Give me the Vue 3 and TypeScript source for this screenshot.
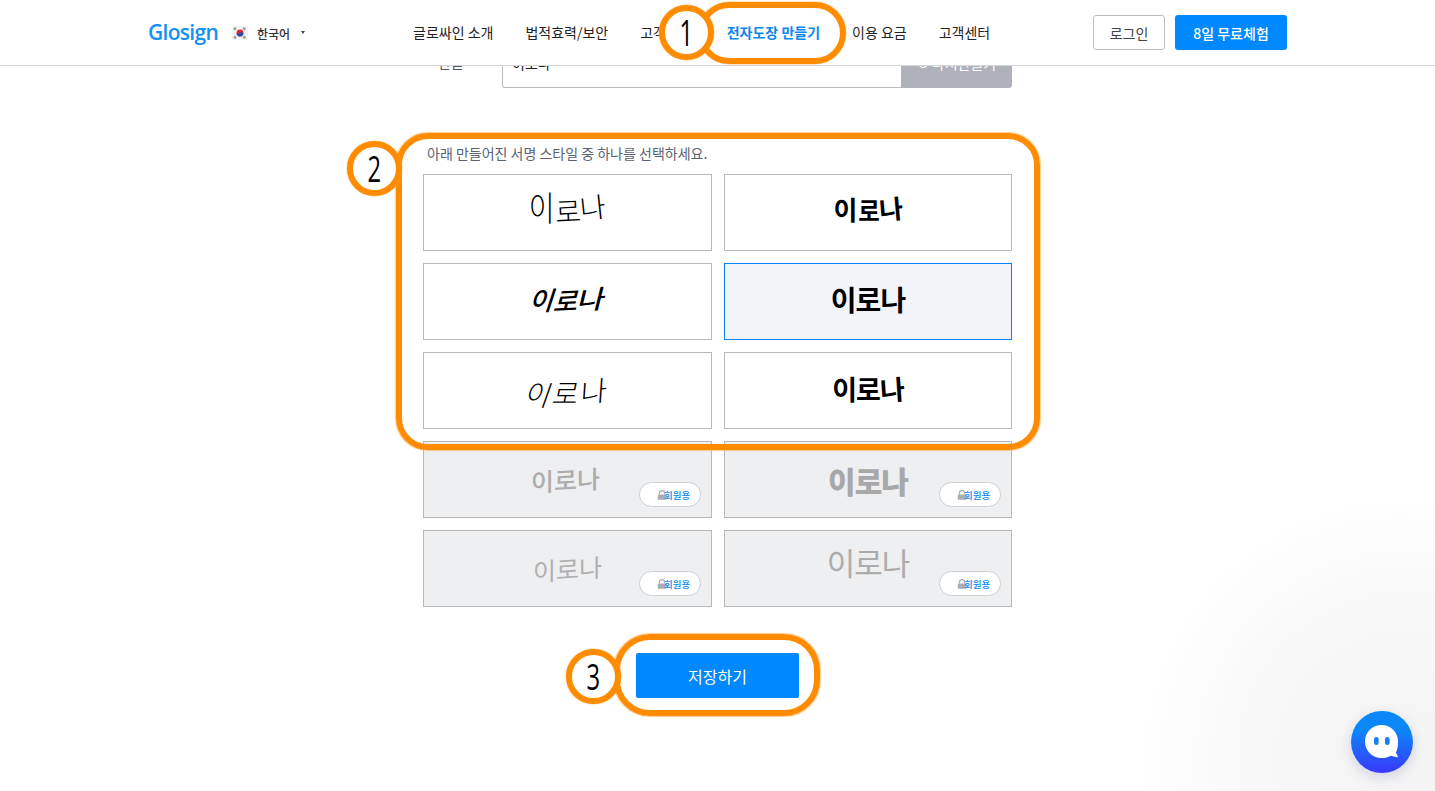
<script setup lang="ts">
interface Sig { id: number; cls: string; locked: boolean; active?: boolean }
const sigs: Sig[] = [
  { id: 1, cls: 's1', locked: false },
  { id: 2, cls: 's2', locked: false },
  { id: 3, cls: 's3', locked: false },
  { id: 4, cls: 's4', locked: false, active: true },
  { id: 5, cls: 's5', locked: false },
  { id: 6, cls: 's6', locked: false },
  { id: 7, cls: 's7', locked: true },
  { id: 8, cls: 's8', locked: true },
  { id: 9, cls: 's9', locked: true },
  { id: 10, cls: 's10', locked: true },
]
const nav = ['글로싸인 소개', '법적효력/보안', '고객사례', '전자도장 만들기', '이용 요금', '고객센터']
</script>

<template>
  <div class="page">
    <div class="corner"></div>

    <main class="content">
      <div class="name-row">
        <label class="name-label">한글</label>
        <div class="name-input">이로나</div>
        <button class="remake">↻ 다시만들기</button>
      </div>
      <p class="hint">아래 만들어진 서명 스타일 중 하나를 선택하세요.</p>
      <div class="grid">
        <div v-for="s in sigs" :key="s.id" class="card" :class="{ active: s.active, locked: s.locked }">
          <span class="sig" :class="s.cls"><span v-for="c in '이로나'" :key="c" class="ch">{{ c }}</span></span>
          <span v-if="s.locked" class="badge">
            <svg class="lock" viewBox="0 0 10 10" width="10" height="10">
              <path d="M2.4 4.6V3.2a2.6 2.6 0 0 1 5.2 0v1.4" fill="none" stroke="#a9adb5" stroke-width="1.2" />
              <rect x="0.8" y="4.4" width="8.4" height="5.4" rx="0.6" fill="#a9adb5" />
            </svg>
            <span class="badge-text">회원용</span>
          </span>
        </div>
      </div>
      <div class="save-wrap">
        <button class="save">저장하기</button>
      </div>
    </main>

    <header class="topbar">
      <div class="brand">
        <span class="logo">Glosign</span>
        <svg class="flag" viewBox="0 0 16 14" width="16" height="14">
          <rect width="16" height="14" fill="#f3f3f3" />
          <g stroke="#8a8a8a" stroke-width="1.1">
            <path d="M1.5 3.2 3.6 1.4M2.4 4.2 4.4 2.400" />
            <path d="M11.6 1.4 13.7 3.2M10.8 2.4 12.8 4.2" />
            <path d="M1.5 10.8 3.6 12.6M2.4 9.8 4.4 11.6" />
            <path d="M11.6 12.6 13.7 10.8M10.8 11.6 12.8 9.8" />
          </g>
          <circle cx="8" cy="7" r="3.4" fill="#d8283c" />
          <path d="M4.6 7a3.4 3.4 0 0 0 6.800 0c-.9-1.200-2.300-1-3.400 0S5.500 8.200 4.600 7z" fill="#1f4fa8" />
        </svg>
        <span class="lang">한국어</span>
        <span class="caret"></span>
      </div>
      <nav class="nav">
        <a v-for="n in nav" :key="n" class="nav-item" :class="{ current: n === '전자도장 만들기' }">{{ n }}</a>
      </nav>
      <div class="actions">
        <button class="login">로그인</button>
        <button class="trial">8일 무료체험</button>
      </div>
    </header>

    <div class="ring ring-nav"></div>
    <div class="ring ring-list"></div>
    <div class="ring ring-save"></div>
    <div class="step step-1"><span>1</span></div>
    <div class="step step-2"><span>2</span></div>
    <div class="step step-3"><span>3</span></div>

    <div class="chat">
      <svg viewBox="0 0 36 36" width="36" height="36">
        <path d="M17.500 1C8.200 1 1 8.200 1 17.500S8.200 34 17.500 34c3.300 0 6.700-.8 9.300-2.300l6.200 1.500c.8.100 1.200-.7.700-1.300l-1.800-3.200c1.500-2.800 2.200-7 2.200-11.200C34 8.200 26.800 1 17.500 1z" fill="#fff" />
        <rect x="10" y="13" width="4.600" height="8" rx="2.300" fill="#1280fb" />
        <rect x="21" y="13" width="4.600" height="8" rx="2.300" fill="#1280fb" />
      </svg>
    </div>
  </div>
</template>

<style>
html, body { margin: 0; padding: 0; background: #fff; overflow: hidden; }
</style>

<style scoped>
.page {
  position: relative;
  width: 1435px;
  height: 791px;
  overflow: hidden;
  background: #fff;
  font-family: "Noto Sans CJK KR", "Noto Sans", sans-serif;
  color: #222;
}
.corner {
  position: absolute;
  right: -230px;
  bottom: -230px;
  width: 520px;
  height: 520px;
  border-radius: 50%;
  background: radial-gradient(circle, #f3f3f3 0%, #f9f9f9 50%, #ffffff 72%);
}
.topbar {
  position: absolute;
  left: 0;
  top: 0;
  width: 100%;
  height: 66px;
  box-sizing: border-box;
  background: #fff;
  border-bottom: 1px solid #d6d6d6;
  display: flex;
  align-items: center;
  padding: 0 148px;
}
.brand { display: flex; align-items: center; width: 265px; }
.logo {
  font-family: "Open Sans", sans-serif;
  font-size: 21px;
  font-weight: 600;
  letter-spacing: -0.7px;
  color: #1590f5;
  width: 84px;
  margin-top: -2px;
}
.flag { margin-right: 9px; }
.lang { font-size: 12px; font-weight: 500; color: #333; width: 41px; margin-top: 1px; }
.caret {
  width: 0;
  height: 0;
  border-left: 2.500px solid transparent;
  border-right: 2.500px solid transparent;
  border-top: 3px solid #444;
  margin-left: 3px;
}
.nav { display: flex; gap: 32px; font-size: 14px; color: #222; white-space: nowrap; margin-top: -2px; }
.nav-item { display: block; line-height: 20px; }
.nav-item.current { color: #0a88f0; font-weight: 700; margin-left: 3px; }
.actions { margin-left: auto; display: flex; gap: 10px; }
.actions button {
  height: 35px;
  font-family: inherit;
  font-size: 14px;
  border-radius: 3px;
  cursor: pointer;
  padding: 0;
}
.login { width: 72px; background: #fff; border: 1px solid #b9bdc4; color: #444; }
.trial { width: 112px; background: #0088ff; border: 0; color: #fff; font-weight: 500; }

.content {
  width: 589px;
  margin: 0 auto;
  padding-top: 38px;
  position: relative;
}
.name-row { display: flex; height: 50px; align-items: stretch; }
.name-label {
  width: 79px;
  padding-left: 15px;
  box-sizing: border-box;
  font-size: 14px;
  line-height: 49px;
  color: #555;
}
.name-input {
  flex: 1;
  border: 1px solid #bcbcbc;
  border-right: 0;
  border-radius: 3px 0 0 3px;
  padding-left: 9px;
  font-size: 14px;
  line-height: 48px;
  color: #222;
}
.remake {
  width: 111px;
  border: 0;
  border-radius: 0 3px 3px 0;
  background: #afb2ba;
  color: #fff;
  font-family: inherit;
  font-size: 14px;
  padding: 0 0 1px;
}
.hint {
  margin: 55px 0 0;
  padding-left: 4px;
  height: 31px;
  font-size: 14px;
  line-height: 20px;
  color: #5b6270;
}
.grid {
  display: grid;
  grid-template-columns: 289px 288px;
  grid-auto-rows: 77px;
  gap: 12px;
}
.card {
  position: relative;
  box-sizing: border-box;
  border: 1px solid #b8b8b8;
  background: #fff;
  display: flex;
  align-items: center;
  justify-content: center;
}
.card.active { border-color: #0a84f5; background: #f2f4f9; }
.card.locked { background: #eeeff1; }
.sig { color: #000; line-height: 1; white-space: nowrap; display: flex; }
.ch { display: block; }
.s1 { font-size: 28px; font-weight: 200; margin-bottom: 9px; }
.s1 .ch:nth-child(1) { transform: translateY(-1px) scaleY(1.2); }
.s1 .ch:nth-child(2) { transform: rotate(-3deg) translateY(2px); }
.s1 .ch:nth-child(3) { transform: rotate(-6deg) translateY(-2px); }
.s2 { font-size: 26px; font-weight: 700; letter-spacing: -1px; margin-bottom: 8px; }
.s2 .ch:nth-child(2) { transform: translateY(1px) scaleX(0.9); }
.s2 .ch:nth-child(3) { transform: rotate(-5deg) translateY(-1px); }
.s3 { font-size: 26px; font-weight: 500; margin-bottom: 6px; transform: skewX(-18deg); }
.s3 .ch:nth-child(2) { transform: translateY(1px) rotate(-3deg); }
.s3 .ch:nth-child(3) { transform: translateY(-1px) scaleX(1.1) rotate(-4deg); }
.s4 { font-size: 28px; font-weight: 700; letter-spacing: -1px; margin-bottom: 6px; }
.s5 { font-size: 28px; font-weight: 300; letter-spacing: 1px; transform: skewX(-12deg); }
.s5 .ch:nth-child(1) { transform: translateY(2px) rotate(8deg); }
.s5 .ch:nth-child(2) { transform: translateY(1px); }
.s5 .ch:nth-child(3) { transform: rotate(-8deg) translateY(-1px); }
.s6 { font-size: 27px; font-weight: 700; letter-spacing: -1px; margin-bottom: 4px; }
.s6 .ch:nth-child(3) { transform: rotate(-4deg); }
.s7 { font-size: 25px; font-weight: 500; color: #acacac; transform: translateX(-2px) skewY(-3deg); }
.s8 { font-size: 30px; font-weight: 900; letter-spacing: -1px; color: #a8a8a8; }
.s9 { font-size: 25px; font-weight: 400; color: #b0b0b0; transform: skewY(-4deg); }
.s10 { font-size: 31px; font-weight: 400; letter-spacing: -1px; color: #acacac; margin-bottom: 14px; }
.badge {
  position: absolute;
  right: 10px;
  bottom: 10px;
  width: 62px;
  height: 25px;
  box-sizing: border-box;
  background: #fff;
  border: 1px solid #cdd0d6;
  border-radius: 13px;
}
.lock { position: absolute; left: 17px; top: 7px; }
.badge-text {
  position: absolute;
  left: 24px;
  top: 0;
  font-size: 9.500px;
  font-weight: 500;
  line-height: 24px;
  color: #0a88f0;
  white-space: nowrap;
}
.save-wrap { display: flex; justify-content: center; margin-top: 46px; }
.save {
  width: 163px;
  height: 45px;
  border: 0;
  border-radius: 2px;
  background: #0088ff;
  color: #fff;
  font-family: inherit;
  font-size: 16px;
}

.ring {
  position: absolute;
  box-sizing: border-box;
  border: 6px solid #ff8c00;
  box-shadow: 0 0 1px 0.500px rgba(255, 170, 70, 0.6);
}
.ring-nav { left: 698px; top: 2px; width: 148px; height: 62px; border-radius: 31px; }
.ring-list { left: 396px; top: 133px; width: 644px; height: 317px; border-radius: 32px; }
.ring-save { left: 614px; top: 634px; width: 206px; height: 82px; border-radius: 36px; }
.step {
  position: absolute;
  box-sizing: border-box;
  width: 55px;
  height: 55px;
  border-radius: 50%;
  border: 6px solid #ff8c00;
  background: #fff;
  box-shadow: 0 0 1px 0.500px rgba(255, 170, 70, 0.6);
  display: flex;
  align-items: center;
  justify-content: center;
  font-family: "Open Sans", sans-serif;
  font-size: 36px;
  font-weight: 400;
  color: #000;
}
.step span { display: block; transform: scaleX(0.66); line-height: 1; }
.step-1 { left: 659px; top: 5px; }
.step-2 { left: 347px; top: 141px; }
.step-3 { left: 566px; top: 649px; }

.chat {
  position: absolute;
  left: 1351px;
  top: 711px;
  width: 62px;
  height: 62px;
  border-radius: 50%;
  background: linear-gradient(180deg, #0a88fa 30%, #3a37fb 100%);
  box-shadow: 0 4px 12px rgba(40, 60, 160, 0.18);
  display: flex;
  align-items: center;
  justify-content: center;
}
</style>
